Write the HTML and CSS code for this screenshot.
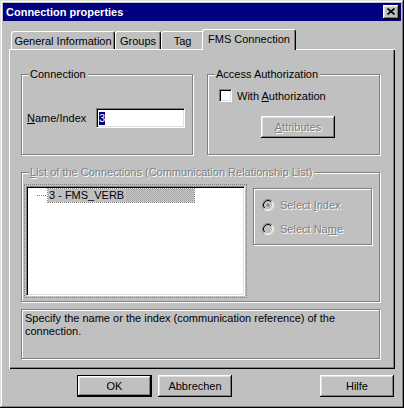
FILE: index.html
```html
<!DOCTYPE html>
<html>
<head>
<meta charset="utf-8">
<link rel="stylesheet" href="styles.css">
</head>
<body>
<div class="window">
  <div class="titlebar">
    <span class="title">Connection properties</span>
    <div class="close">
      <svg width="8" height="7" viewBox="0 0 8 7"><path d="M0.5 0.5 L7.5 6.5 M7.5 0.5 L0.5 6.5" stroke="#000" stroke-width="1.6" fill="none"/></svg>
    </div>
  </div>
  <div class="tabs">
    <div class="tab t-gen">General Information</div>
    <div class="tab t-grp">Groups</div>
    <div class="tab t-tag">Tag</div>
    <div class="tab t-fms active">FMS Connection</div>
  </div>
  <div class="panel">
    <div class="row">
      <div class="group g-conn">
        <span class="legend">Connection</span>
        <div class="field-row">
          <span class="lbl"><u>N</u>ame/Index</span>
          <div class="input"><span class="sel">3</span></div>
        </div>
      </div>
      <div class="group g-access">
        <span class="legend">Access Authorization</span>
        <div class="check-row">
          <span class="checkbox"></span>
          <span>With <u>A</u>uthorization</span>
        </div>
        <div class="btn attr disabled"><span><u>A</u>ttributes</span></div>
      </div>
    </div>
    <div class="group g-list">
      <span class="legend disabled"><u>L</u>ist of the Connections (Communication Relationship List)</span>
      <div class="list-row">
        <div class="focus">
          <div class="tree">
            <div class="item">
              <span class="branch"></span>
              <span class="item-sel"><span class="item-text">3 - FMS_VERB</span><span class="item-fill"></span></span>
            </div>
          </div>
        </div>
        <div class="radios">
          <div class="radio-row disabled">
            <svg width="12" height="12" viewBox="0 0 12 12">
              <circle cx="6" cy="6" r="4.2" fill="#c0c0c0"/>
              <path d="M2.11 9.89 A5.5 5.5 0 0 1 9.89 2.11" stroke="#808080" fill="none"/>
              <path d="M9.89 2.11 A5.5 5.5 0 0 1 2.11 9.89" stroke="#fff" fill="none"/>
              <path d="M2.82 9.18 A4.5 4.5 0 0 1 9.18 2.82" stroke="#000" fill="none"/>
              <path d="M9.18 2.82 A4.5 4.5 0 0 1 2.82 9.18" stroke="#dfdfdf" fill="none"/>
              <circle cx="6" cy="6" r="1.6" fill="#808080"/>
            </svg>
            <span>Select <u>I</u>ndex</span>
          </div>
          <div class="radio-row disabled">
            <svg width="12" height="12" viewBox="0 0 12 12">
              <circle cx="6" cy="6" r="4.2" fill="#c0c0c0"/>
              <path d="M2.11 9.89 A5.5 5.5 0 0 1 9.89 2.11" stroke="#808080" fill="none"/>
              <path d="M9.89 2.11 A5.5 5.5 0 0 1 2.11 9.89" stroke="#fff" fill="none"/>
              <path d="M2.82 9.18 A4.5 4.5 0 0 1 9.18 2.82" stroke="#000" fill="none"/>
              <path d="M9.18 2.82 A4.5 4.5 0 0 1 2.82 9.18" stroke="#dfdfdf" fill="none"/>
            </svg>
            <span>Select Na<u>m</u>e</span>
          </div>
        </div>
      </div>
    </div>
    <div class="desc">Specify the name or the index (communication reference) of the<br>connection.</div>
  </div>
  <div class="buttons">
    <div class="default"><div class="btn b-ok">OK</div></div>
    <div class="btn b-cancel">Abbrechen</div>
    <div class="btn b-help">Hilfe</div>
  </div>
</div>
</body>
</html>
```
FILE: styles.css
```css
html, body {
  margin: 0;
  padding: 0;
  background: #c0c0c0;
}

.window {
  width: 404px;
  height: 408px;
  box-sizing: border-box;
  padding: 3px;
  background: #c0c0c0;
  box-shadow: inset -1px -1px #000, inset 1px 1px #dfdfdf, inset -2px -2px #808080, inset 2px 2px #fff;
  font-family: "Liberation Sans", Arial, sans-serif;
  font-size: 11px;
  color: #000;
}

.titlebar {
  height: 18px;
  background: #000080;
  display: flex;
  align-items: center;
  justify-content: space-between;
  padding: 0 2px 0 3px;
}

.title {
  color: #fff;
  font-weight: bold;
  font-size: 11px;
}

.close {
  width: 16px;
  height: 14px;
  box-sizing: border-box;
  background: #c0c0c0;
  box-shadow: inset -1px -1px #000, inset 1px 1px #fff, inset -2px -2px #808080, inset 2px 2px #dfdfdf;
  display: flex;
  align-items: center;
  justify-content: center;
  padding: 0 1px 1px 0;
}

.close svg { display: block; }

.tabs {
  display: flex;
  align-items: flex-end;
  height: 20px;
  margin-top: 8px;
  padding-left: 8px;
}

.tab {
  height: 18px;
  box-sizing: border-box;
  border-top: 1px solid #fff;
  border-left: 1px solid #fff;
  border-right: 1px solid #000;
  border-radius: 3px 3px 0 0;
  box-shadow: inset -1px 0 #808080;
  line-height: 18px;
  text-align: center;
  white-space: nowrap;
  background: #c0c0c0;
}

.t-gen { width: 104px; }
.t-grp { width: 46px; }
.t-tag { width: 43px; }

.tab.active {
  width: 94px;
  height: 21px;
  margin: 0 0 -1px -2px;
  position: relative;
  z-index: 2;
  line-height: 18px;
}

.panel {
  position: relative;
  z-index: 1;
  margin: 0 6px;
  height: 320px;
  box-sizing: border-box;
  padding: 25px 0 0 12px;
  box-shadow: inset 1px 1px #fff, inset -1px -1px #000, inset -2px -2px #808080;
}

.row {
  display: flex;
  gap: 14px;
}

.group {
  position: relative;
  box-sizing: border-box;
  border: 1px solid #808080;
  box-shadow: inset 1px 1px #fff, 1px 1px #fff;
}

.legend {
  position: absolute;
  left: 7px;
  top: -8px;
  padding: 0 2px 0 1px;
  line-height: 14px;
  background: #c0c0c0;
  white-space: nowrap;
}

.disabled {
  color: #808080;
  text-shadow: 1px 1px #fff;
}

.g-conn {
  width: 172px;
  height: 81px;
  padding: 33px 0 0 5px;
}

.field-row {
  display: flex;
  align-items: center;
}

.lbl {
  width: 69px;
}

.input {
  width: 89px;
  height: 20px;
  box-sizing: border-box;
  background: #fff;
  border-top: 1px solid #808080;
  border-left: 1px solid #808080;
  border-bottom: 1px solid #fff;
  border-right: 1px solid #fff;
  box-shadow: inset 1px 1px #000, inset -1px -1px #dfdfdf;
  padding: 1px 0 0 2px;
  display: flex;
  align-items: center;
}

.sel {
  background: #000080;
  color: #fff;
  line-height: 13px;
  padding: 0 0 0 0;
}

.g-access {
  width: 173px;
  height: 81px;
  padding: 14px 0 0 11px;
}

.check-row {
  display: flex;
  align-items: center;
  gap: 5px;
  height: 13px;
}

.checkbox {
  width: 13px;
  height: 13px;
  box-sizing: border-box;
  background: #fff;
  border-top: 1px solid #808080;
  border-left: 1px solid #808080;
  border-bottom: 1px solid #fff;
  border-right: 1px solid #fff;
  box-shadow: inset 1px 1px #000, inset -1px -1px #dfdfdf;
}

.btn {
  box-sizing: border-box;
  height: 22px;
  background: #c0c0c0;
  box-shadow: inset -1px -1px #000, inset 1px 1px #fff, inset -2px -2px #808080, inset 2px 2px #dfdfdf;
  display: flex;
  align-items: center;
  justify-content: center;
}

.attr {
  width: 74px;
  margin: 14px 0 0 42px;
}

.g-list {
  width: 359px;
  height: 130px;
  margin-top: 17px;
  padding: 11px 0 0 2px;
}

.list-row {
  display: flex;
  align-items: flex-start;
}

.focus {
  border: 1px dotted #808080;
  padding: 1px;
}

.tree {
  width: 219px;
  height: 110px;
  box-sizing: border-box;
  background: #fff;
  border-top: 1px solid #808080;
  border-left: 1px solid #808080;
  border-bottom: 1px solid #fff;
  border-right: 1px solid #fff;
  box-shadow: inset 1px 1px #000, inset -1px -1px #dfdfdf;
  padding: 1px 0 0 1px;
}

.item {
  display: flex;
  align-items: center;
  height: 15px;
}

.branch {
  width: 9px;
  margin-left: 9px;
  border-top: 1px dotted #808080;
}

.item-sel {
  margin-left: 1px;
  width: 148px;
  height: 15px;
  box-sizing: border-box;
  border: 1px dotted #808080;
  display: flex;
  align-items: stretch;
}

.item-text {
  background: #c0c0c0;
  padding: 0 2px 0 1px;
  line-height: 13px;
}

.item-fill {
  flex: 1;
  background: repeating-conic-gradient(#a8a8a8 0 25%, #c8c8c8 0 50%) 0 0 / 2px 2px;
}

.radios {
  box-sizing: border-box;
  width: 119px;
  height: 57px;
  margin: 4px 0 0 6px;
  border: 1px solid #808080;
  box-shadow: inset 1px 1px #fff, 1px 1px #fff;
  padding: 4px 0 0 8px;
}

.radio-row {
  display: flex;
  align-items: center;
  gap: 6px;
  height: 24px;
}

.radio-row svg { display: block; flex: none; }

.desc {
  box-sizing: border-box;
  width: 359px;
  height: 50px;
  margin-top: 7px;
  border: 1px solid #808080;
  box-shadow: inset 1px 1px #fff, 1px 1px #fff;
  padding: 2px 3px;
  line-height: 13px;
}

.buttons {
  display: flex;
  margin-top: 6px;
  padding-left: 74px;
}

.default {
  box-sizing: border-box;
  width: 75px;
  height: 22px;
  border: 1px solid #000;
}

.b-ok {
  height: 20px;
  width: 73px;
}

.b-cancel {
  width: 74px;
  margin-left: 6px;
}

.b-help {
  width: 74px;
  margin-left: 88px;
}
```
